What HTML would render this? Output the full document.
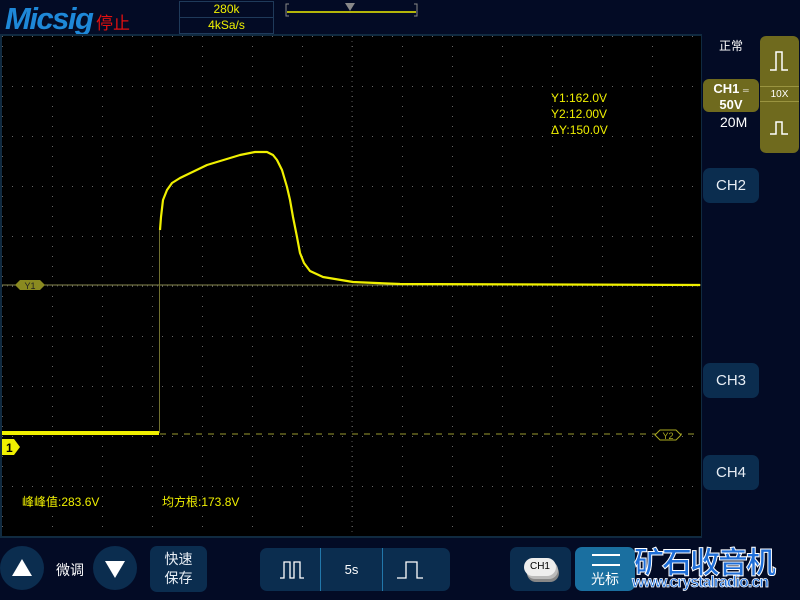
<!DOCTYPE html>
<html><head><meta charset="utf-8"><style>
*{margin:0;padding:0;box-sizing:border-box}
body{width:800px;height:600px;background:#030b25;overflow:hidden;position:relative;font-family:"Liberation Sans","Noto Sans CJK SC",sans-serif;color:#fff}
.a{position:absolute}
.btn{position:absolute;background:#0b2d4f;border-radius:7px;color:#e8eef5;text-align:center}
</style></head><body>
<div class="a" style="left:5px;top:1px;font:italic bold 31px 'Liberation Sans',sans-serif;color:#1e88d8;letter-spacing:-1.5px">Micsig</div>
<div class="a" style="left:96px;top:9px;font-size:17px;color:#e01010;font-family:'Noto Sans CJK SC',sans-serif">停止</div>
<div class="a" style="left:179px;top:1px;width:95px;height:33px;border:1px solid #1f3a5a"></div>
<div class="a" style="left:179px;top:17px;width:95px;height:1px;background:#1f3a5a"></div>
<div class="a" style="left:179px;top:2px;width:95px;text-align:center;font-size:12px;color:#f0f000">280k</div>
<div class="a" style="left:179px;top:18px;width:95px;text-align:center;font-size:12px;color:#f0f000">4kSa/s</div>
<svg class="a" style="left:285px;top:0" width="135" height="20"><path d="M4 4H1V16H4M129 4H132V16H129" stroke="#888" fill="none"/><line x1="2" y1="12" x2="131" y2="12" stroke="#ee0" stroke-width="1.5"/><path d="M60 3H70L65 11Z" fill="#888"/></svg>
<svg class="a" style="left:0;top:34px" width="702" height="504">
<defs><pattern id="g" x="2" y="2" width="50" height="50" patternUnits="userSpaceOnUse">
<g fill="#666"><rect x="0" y="0" width="1" height="1"/><rect x="0" y="10" width="1" height="1"/><rect x="0" y="20" width="1" height="1"/><rect x="0" y="30" width="1" height="1"/><rect x="0" y="40" width="1" height="1"/><rect x="10" y="0" width="1" height="1"/><rect x="20" y="0" width="1" height="1"/><rect x="30" y="0" width="1" height="1"/><rect x="40" y="0" width="1" height="1"/></g></pattern></defs>
<rect x="0" y="0" width="702" height="504" fill="#102a40"/>
<rect x="2" y="2" width="699" height="500" fill="#000"/>
<rect x="2" y="2" width="699" height="500" fill="url(#g)"/>
<line x1="352" y1="2" x2="352" y2="502" stroke="#555" stroke-dasharray="1,4"/>
<line x1="2" y1="252" x2="701" y2="252" stroke="#555" stroke-dasharray="1,4"/>
<line x1="2" y1="251" x2="701" y2="251" stroke="#8a8a50" stroke-width="1"/>
<line x1="160" y1="400" x2="700" y2="400" stroke="#9a9a30" stroke-dasharray="6,6"/>
<line x1="159.5" y1="399" x2="159.5" y2="196" stroke="#707030"/>
<path d="M20 246H40L45 251L40 256H20L15 251Z" fill="#8a8a20"/><text x="30" y="255" font-size="9" fill="#222" text-anchor="middle" font-family="Liberation Sans">Y1</text>
<path d="M660 396H676L681 401L676 406H660L655 401Z" fill="#000" stroke="#aaaa20"/><text x="668" y="405" font-size="9" fill="#aaaa20" text-anchor="middle" font-family="Liberation Sans">Y2</text>
<rect x="2" y="397" width="157" height="4" fill="#f0f000"/>
<path d="M160 196L161 183L163 166L167 156L172 149L180 144L207 131L240 121L255 118L267 118L273 121L277 126L282 136L287 153L290 166L293 183L297 203L300 219L304 229L310 237L323 243L353 248L400 250L700 251" fill="none" stroke="#f0f000" stroke-width="2.2" stroke-linejoin="round"/>
<path d="M2 405H14L20 413L14 421H2Z" fill="#f0f000"/><text x="6" y="418" font-size="12" font-weight="bold" fill="#000" font-family="Liberation Sans">1</text>
</svg>
<div class="a" style="left:551px;top:90px;font-size:12px;line-height:16px;color:#f0f000">Y1:162.0V<br>Y2:12.00V<br>ΔY:150.0V</div>
<div class="a" style="left:22px;top:493px;font-size:12px;color:#f0f000">峰峰值:283.6V</div>
<div class="a" style="left:162px;top:493px;font-size:12px;color:#f0f000">均方根:173.8V</div>
<div class="a" style="left:719px;top:37px;font-size:12px">正常</div>
<div class="a" style="left:703px;top:79px;width:56px;height:33px;background:#6f6a1e;border-radius:6px;text-align:center;font-weight:bold;font-size:13px;line-height:14px;padding-top:3px">CH1 <span style="font-size:8px">═</span><br>50V</div>
<div class="a" style="left:720px;top:114px;font-size:14px">20M</div>
<div class="a" style="left:760px;top:36px;width:39px;height:117px;background:#6f6a1e;border-radius:6px"></div>
<div class="a" style="left:760px;top:86px;width:39px;height:1px;background:#9a9440"></div>
<div class="a" style="left:760px;top:101px;width:39px;height:1px;background:#9a9440"></div>
<div class="a" style="left:760px;top:89px;width:39px;text-align:center;font-size:10px">10X</div>
<svg class="a" style="left:768px;top:50px" width="24" height="90"><path d="M2 20H8V2H14V20H20" stroke="#fff" fill="none" stroke-width="1.5"/><path d="M2 84H8V72H14V84H20" stroke="#fff" fill="none" stroke-width="1.5"/></svg>
<div class="btn" style="left:703px;top:168px;width:56px;height:35px;line-height:35px;font-size:15px">CH2</div>
<div class="btn" style="left:703px;top:363px;width:56px;height:35px;line-height:35px;font-size:15px">CH3</div>
<div class="btn" style="left:703px;top:455px;width:56px;height:35px;line-height:35px;font-size:15px">CH4</div>
<div class="a" style="left:0;top:546px;width:44px;height:44px;border-radius:50%;background:#0b2d4f"></div>
<div class="a" style="left:12px;top:559px;width:0;height:0;border-left:10px solid transparent;border-right:10px solid transparent;border-bottom:17px solid #fff"></div>
<div class="a" style="left:56px;top:560px;font-size:14px">微调</div>
<div class="a" style="left:93px;top:546px;width:44px;height:44px;border-radius:50%;background:#0b2d4f"></div>
<div class="a" style="left:105px;top:561px;width:0;height:0;border-left:10px solid transparent;border-right:10px solid transparent;border-top:17px solid #fff"></div>
<div class="btn" style="left:150px;top:546px;width:57px;height:46px;font-size:14px;line-height:19px;padding-top:4px">快速<br>保存</div>
<div class="btn" style="left:260px;top:548px;width:130px;height:43px"></div>
<div class="a" style="left:320px;top:548px;width:1px;height:43px;background:#2277aa"></div>
<div class="a" style="left:382px;top:548px;width:1px;height:43px;background:#2277aa"></div>
<div class="btn" style="left:383px;top:548px;width:67px;height:43px;border-radius:0 7px 7px 0"></div>
<div class="a" style="left:321px;top:562px;width:61px;text-align:center;font-size:13px">5s</div>
<svg class="a" style="left:270px;top:556px" width="170" height="30"><path d="M10 22H14V6H20V22H24V6H30V22H34" stroke="#fff" fill="none" stroke-width="1.3"/><path d="M127 22H136V6H147V22H153" stroke="#fff" fill="none" stroke-width="1.3"/></svg>
<div class="btn" style="left:510px;top:547px;width:61px;height:44px"></div>
<div class="a" style="left:524px;top:558px;width:32px;height:18px;border-radius:9px;background:#eee;color:#000;font-size:10px;text-align:center;line-height:18px;box-shadow:2px 3px 0 #bbb,3px 6px 0 #888">CH1</div>
<div class="a" style="left:575px;top:547px;width:60px;height:44px;background:#1a6fa0;border-radius:7px"></div>
<div class="a" style="left:592px;top:554px;width:28px;height:2px;background:#fff"></div>
<div class="a" style="left:592px;top:564px;width:28px;height:2px;background:#fff"></div>
<div class="a" style="left:591px;top:569px;font-size:14px">光标</div>
<div class="a" style="left:634px;top:538px;font-size:30px;font-weight:bold;color:#1e6ed8;-webkit-text-stroke:1px #fff;letter-spacing:-2px">矿石收音机</div>
<div class="a" style="left:632px;top:574px;font-size:16px;font-weight:bold;color:#1e6ed8;-webkit-text-stroke:0.7px #fff;letter-spacing:-1px">www.crystalradio.cn</div>
</body></html>
